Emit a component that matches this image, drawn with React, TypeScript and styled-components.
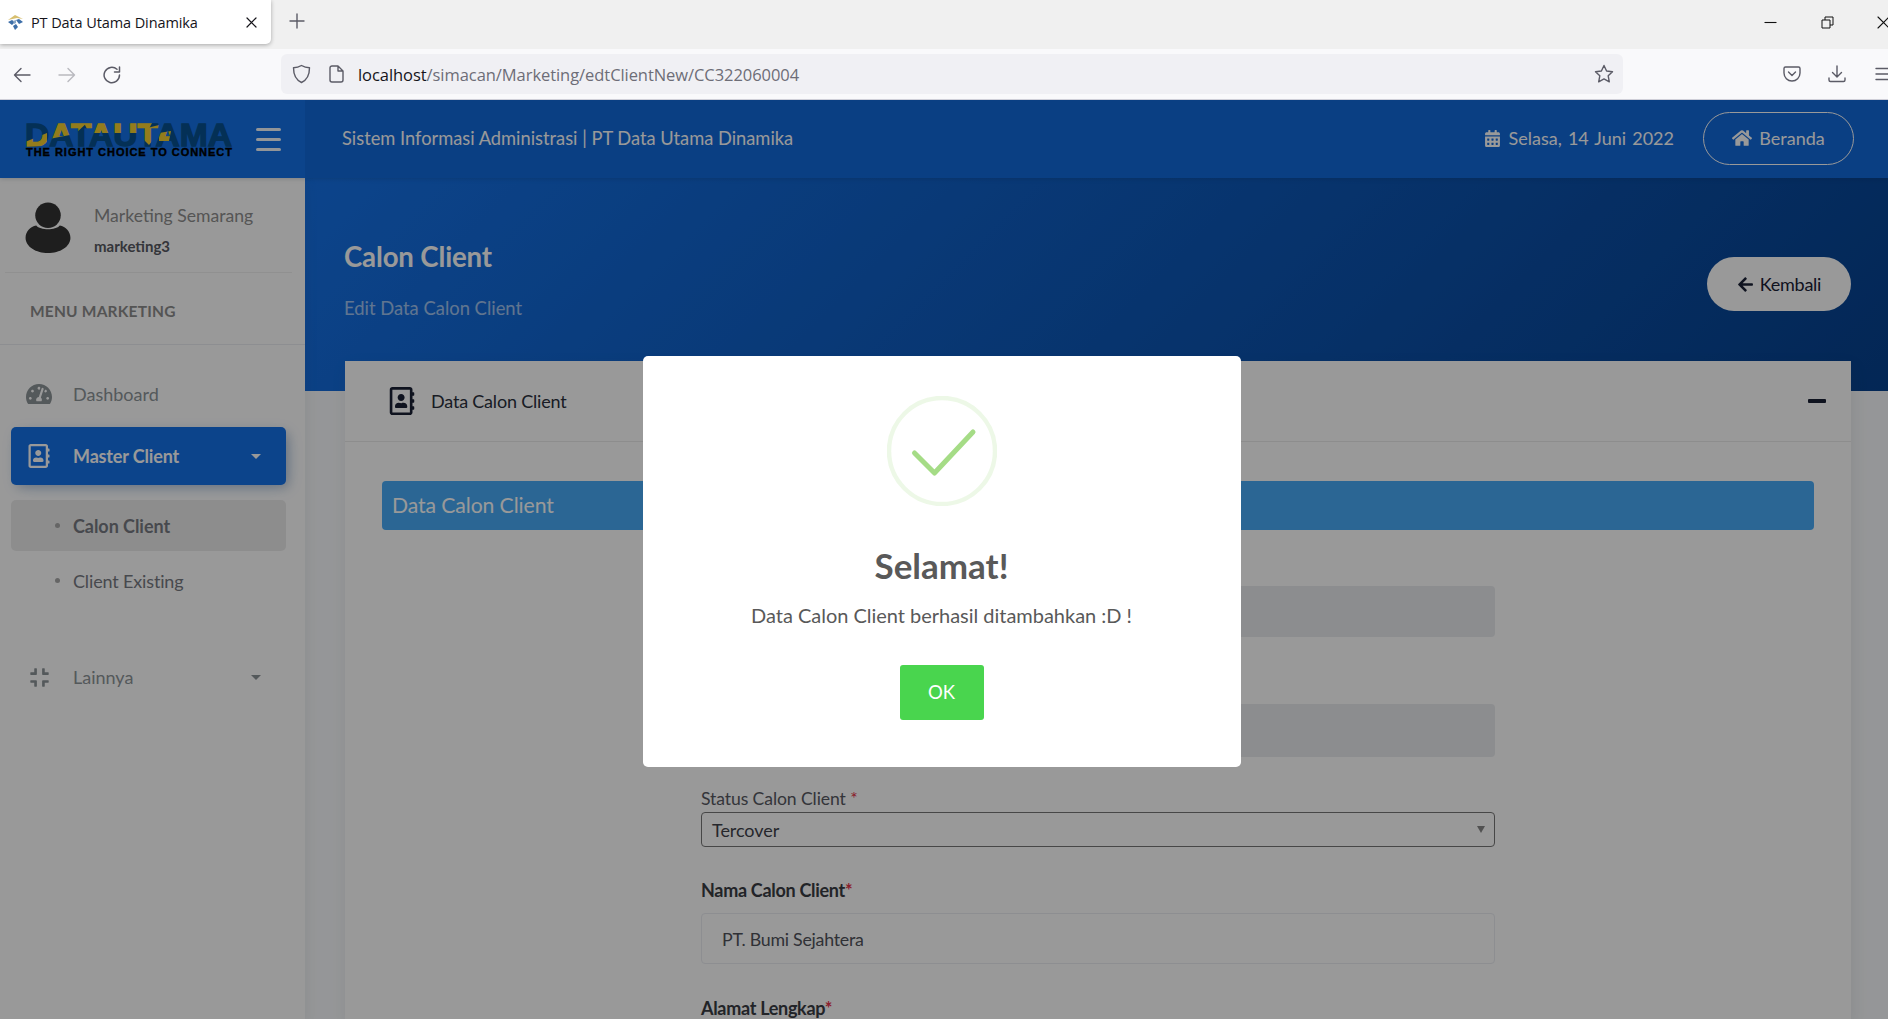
import React from 'react';
import styled, { createGlobalStyle } from 'styled-components';
import { FaHome, FaCalendarAlt, FaArrowLeft, FaTachometerAlt, FaRegAddressBook, FaCompress } from 'react-icons/fa';

const Global = createGlobalStyle`
  html, body { margin: 0; padding: 0; height: 100%; overflow: hidden; background: #fff; }
  * { box-sizing: border-box; }
  #root { height: 100vh; }
`;

const Shell = styled.div`
  width: 1888px; height: 1019px; display: flex; flex-direction: column; overflow: hidden;
  font-family: Lato, "Liberation Sans", sans-serif;
`;

/* Browser chrome */
const TabStrip = styled.div`
  height: 49px; flex: none; background: #f0f0f0; display: flex; align-items: flex-start;
`;
const Tab = styled.div`
  width: 271px; height: 44px; background: #fff; border-radius: 0 0 5px 0;
  box-shadow: 0 1px 4px rgba(0,0,0,.3); display: flex; align-items: center; padding: 0 14px 0 7px;
  font: 14.5px "Open Sans", "Noto Sans", sans-serif; color: #15141a;
`;
const TabTitle = styled.span` margin-left: 7px; flex: 1; white-space: nowrap; letter-spacing: -.1px; `;
const NewTab = styled.div` margin: 13px 0 0 18px; width: 16px; height: 18px; color: #5b5b66; display: flex; `;
const WindowControls = styled.div`
  margin-left: auto; height: 44px; display: flex; align-items: center; color: #111;
`;
const WinBtn = styled.div<{ $w: number }>` width: ${p => p.$w}px; display: flex; `;

const Toolbar = styled.div`
  height: 51px; flex: none; background: #f9f9fb; border-bottom: 1px solid #cfcfd8;
  display: flex; align-items: center; color: #5b5b66;
`;
const NavButtons = styled.div` width: 281px; padding: 2px 0 0 13px; display: flex; gap: 27px; `;
const DimmedIcon = styled.span` opacity: .4; display: flex; `;
const UrlBar = styled.div`
  width: 1342px; height: 40px; background: #f0f0f4; border-radius: 6px; display: flex; align-items: center;
  padding: 0 9px 0 11px; font: 16.5px "Open Sans", "Noto Sans", sans-serif;
`;
const PageGlyph = styled.span` margin-left: 17px; display: flex; `;
const UrlText = styled.div` margin-left: 14px; flex: 1; color: #6d6d77; white-space: nowrap; letter-spacing: -.06px; b { font-weight: 400; color: #15141a; } `;
const ToolIcons = styled.div` flex: 1; display: flex; justify-content: flex-end; gap: 27px; margin-right: -6px; overflow: hidden; `;

/* Page */
const Page = styled.div` position: relative; flex: 1; min-height: 0; display: flex; flex-direction: column; background: #f9fbfd; overflow: hidden; `;
const TopBar = styled.header` height: 78px; flex: none; display: flex; position: relative; z-index: 2; box-shadow: 0 0 5px rgba(18,38,63,.25); `;
const Brand = styled.div` width: 305px; background: #1572e8; display: flex; align-items: center; padding-left: 25px; `;
const Burger = styled.div` margin-left: 23px; width: 25px; display: flex; flex-direction: column; gap: 7px; `;
const BurgerBar = styled.span` height: 3px; background: #fff; border-radius: 2px; opacity: .95; `;
const HeaderBar = styled.div`
  flex: 1; background: #1269db; display: flex; align-items: center; padding: 0 34px 2px 37px; color: #fff; font-size: 18px;
`;
const HeaderTitle = styled.div` flex: 1; font-size: 18.3px; `;
const DateText = styled.div` display: flex; align-items: center; gap: 8px; margin-right: 29px; word-spacing: 1.5px; `;
const HomePill = styled.div`
  width: 151px; height: 53px; border: 1px solid #fff; border-radius: 27px; display: flex; align-items: center;
  justify-content: center; gap: 7px; font-size: 18px;
`;

const Body = styled.div` flex: 1; min-height: 0; display: flex; `;
const Sidebar = styled.aside`
  width: 305px; flex: none; background: #fff; position: relative; z-index: 1;
  box-shadow: 4px 4px 10px rgba(69,65,78,.06);
`;
const UserBlock = styled.div`
  height: 95px; margin: 0 13px 0 5px; border-bottom: 1px solid #f1f1f1; display: flex; align-items: center; padding: 4px 0 0 20px;
`;
const UserInfo = styled.div` margin-left: 23px; display: flex; flex-direction: column; gap: 11px; margin-top: 6px; `;
const UserName = styled.div` font-size: 17.6px; line-height: 20px; color: #8e8e8e; `;
const UserLogin = styled.div` font-size: 15px; line-height: 18px; font-weight: 700; color: #575962; `;
const MenuTitle = styled.div`
  height: 72px; border-bottom: 1px solid #ebedf2; display: flex; align-items: center; padding: 5px 0 0 30px;
  font-size: 15.5px; font-weight: 700; color: #8d8d8d; letter-spacing: .2px;
`;
const Nav = styled.nav` padding-top: 20px; `;
const NavItem = styled.div<{ $active?: boolean }>`
  height: 58px; margin: 0 19px 4px 11px; padding: 0 25px 0 15px; display: flex; align-items: center; border-radius: 5px;
  font-size: 18px; color: ${p => (p.$active ? '#fff' : '#8d9498')}; font-weight: ${p => (p.$active ? 700 : 400)};
  background: ${p => (p.$active ? '#1572e8' : 'transparent')};
  box-shadow: ${p => (p.$active ? '4px 4px 10px 0 rgba(0,0,0,.1), 4px 4px 15px -5px rgba(21,114,232,.4)' : 'none')};
  letter-spacing: ${p => (p.$active ? '-.15px' : '0')};
`;
const NavIcon = styled.span` width: 32px; margin: 0 18px 0 -3px; display: flex; justify-content: center; `;
const Caret = styled.span`
  margin-left: auto; width: 0; height: 0; border-left: 5px solid transparent; border-right: 5px solid transparent; border-top: 5px solid currentColor;
`;
const SubList = styled.div` padding-top: 11px; margin-bottom: 42px; `;
const SubItem = styled.div<{ $active?: boolean }>`
  height: 51px; margin: 0 19px 4px 11px; padding-left: 44px; display: flex; align-items: center; border-radius: 5px;
  font-size: 18px; color: #777a82; font-weight: ${p => (p.$active ? 700 : 400)};
  background: ${p => (p.$active ? '#ececec' : 'transparent')};
  letter-spacing: ${p => (p.$active ? '-.05px' : '-.15px')};
`;
const Dot = styled.span` width: 5px; height: 5px; border-radius: 50%; background: #a9a9a9; margin-right: 13px; flex: none; `;

const Main = styled.main` flex: 1; min-width: 0; display: flex; flex-direction: column; overflow: hidden; `;
const Hero = styled.div`
  height: 213px; flex: none; background: linear-gradient(-45deg, #06418e, #1572e8); display: flex; align-items: flex-start; justify-content: space-between;
  padding: 79px 37px 0 39px; color: #fff;
`;
const HeroTitle = styled.h2` margin: -17px 0 0; font-size: 27.6px; line-height: 34px; font-weight: 700; letter-spacing: -.15px; `;
const HeroSub = styled.div` margin-top: 24px; font-size: 18.4px; line-height: 20px; opacity: .6; `;
const BackBtn = styled.div`
  width: 144px; height: 54px; background: #fff; color: #1a2035; border-radius: 27px; display: flex; align-items: center; justify-content: center; gap: 6px;
  font-size: 18px; letter-spacing: -.25px;
`;
const Card = styled.section` margin: -30px 37px 0 40px; background: #fff; flex: 1; box-shadow: 2px 6px 15px 0 rgba(69,65,78,.1); `;
const CardHeader = styled.div`
  height: 81px; border-bottom: 1px solid #ebecec; display: flex; align-items: center; padding: 0 25px 0 43px; font-size: 18px; color: #2a2f3c;
`;
const CardHeaderTitle = styled.span` margin-left: 15px; flex: 1; letter-spacing: -.2px; `;
const MinusMark = styled.span` width: 18px; height: 4px; background: #1a2035; border-radius: 1px; `;
const CardBody = styled.div` padding: 39px 37px 0 37px; `;
const SectionBar = styled.div`
  height: 49px; background: #48abf7; border-radius: 4px; color: #fff; display: flex; align-items: center; padding: 0 0 2px 10px; font-size: 21.2px; letter-spacing: -.1px;
`;
const Form = styled.div` margin-left: 319px; width: 794px; `;
const ReadOnly = styled.div<{ $top: number; $h: number }>`
  margin-top: ${p => p.$top}px; height: ${p => p.$h}px; background: #e9ecef; border-radius: 4px;
`;
const Label = styled.div<{ $top: number; $strong?: boolean }>`
  margin-top: ${p => p.$top}px; line-height: 20px; font-size: ${p => (p.$strong ? 18 : 17.6)}px; color: ${p => (p.$strong ? '#3a3c44' : '#575962')};
  font-weight: ${p => (p.$strong ? 700 : 400)}; letter-spacing: ${p => (p.$strong ? '-.3px' : '-.1px')};
  i { font-style: normal; color: #e8344c; }
`;
const SelectBox = styled.div`
  margin-top: 3px; height: 35px; border: 1px solid #777; border-radius: 4px; background: #fff; display: flex; align-items: center; justify-content: space-between;
  padding: 0 9px 0 10px; font-size: 18px; color: #40424a; letter-spacing: -.05px;
`;
const SelectArrow = styled.span` width: 0; height: 0; border-left: 4.5px solid transparent; border-right: 4.5px solid transparent; border-top: 7px solid #888; `;
const TextBox = styled.div`
  margin-top: 13px; height: 51px; border: 1px solid #ebedf2; border-radius: 4px; display: flex; align-items: center; padding-left: 20px; font-size: 17.8px; color: #50525a; letter-spacing: -.25px;
`;

/* Dialog */
const Overlay = styled.div`
  position: absolute; inset: 0; z-index: 10; background: rgba(0,0,0,.4); display: flex; align-items: center; justify-content: center; padding: 3px 5px 0 0;
`;
const Modal = styled.div`
  width: 598px; height: 411px; background: #fff; border-radius: 5px; display: flex; flex-direction: column; align-items: center; padding-top: 40px;
`;
const ModalTitle = styled.div` margin-top: 37px; font-size: 35px; line-height: 44px; font-weight: 700; color: #595959; `;
const ModalText = styled.div` margin-top: 16px; font-size: 20px; line-height: 24px; color: #595959; letter-spacing: -.02px; `;
const OkBtn = styled.div`
  margin-top: 38px; width: 84px; height: 55px; background: #49d54e; border-radius: 3px; color: #fff; font-size: 18.5px; display: flex; align-items: center; justify-content: center;
`;

const Logo = () => (
  <svg width="208" height="36" viewBox="0 0 208 36" style={{ display: 'block', overflow: 'visible' }}>
    <defs>
      <pattern id="logoFill" patternUnits="userSpaceOnUse" width="208" height="36">
        <rect width="208" height="36" fill="#07508f" />
        <polygon points="0,21 22,12 22,25 0,26" fill="#f5cf30" />
        <polygon points="28,0 64,0 50,13 24,18" fill="#f5cf30" />
        <polygon points="58,0 128,0 122,12 64,12" fill="#f5cf30" />
        <polygon points="118,8 134,4 132,14 124,24 114,14" fill="#f5cf30" />
        <polygon points="134,12 146,10 144,20 134,20" fill="#f5cf30" />
      </pattern>
    </defs>
    <text x="0" y="24.5" textLength="207" lengthAdjust="spacingAndGlyphs" fontFamily="Liberation Sans" fontWeight="700" fontSize="32" fill="url(#logoFill)" stroke="url(#logoFill)" strokeWidth="1.3">DATAUTAMA</text>
    <text x="1" y="34.5" textLength="206" lengthAdjust="spacing" fontFamily="Liberation Sans" fontWeight="700" fontSize="11" fill="#000" stroke="#000" strokeWidth=".4">THE RIGHT CHOICE TO CONNECT</text>
  </svg>
);

const Favicon = () => (
  <svg width="17" height="17" viewBox="0 0 17 17">
    <path d="M1 6 L8 1 L16 5 L10 4 Z" fill="#d8c070" />
    <path d="M1 8 L5 6 L8 8 L5 11 Z M9 6 L12 5 L16 8 L12 10 Z M6 12 L9 10 L11 13 L8 16 Z" fill="#3c6ea8" />
    <path d="M6 7 L9 6 L9 9 L7 10 Z" fill="#8aa8c8" />
  </svg>
);
const Glyph = ({ w = 18, h = 18, children }: { w?: number; h?: number; children: React.ReactNode }) => (
  <svg width={w} height={h} viewBox={`0 0 ${w} ${h}`} fill="none" stroke="currentColor" strokeWidth="1.4" strokeLinecap="round" strokeLinejoin="round" style={{ display: 'block', flex: 'none' }}>{children}</svg>
);
const Avatar = () => (
  <svg width="46" height="51" viewBox="0 0 45 50" style={{ flex: 'none' }}>
    <circle cx="22.5" cy="13" r="12.5" fill="#333" />
    <path d="M11 23 C15 28 30 28 34 23 C40 24 44.5 29 44.5 35 C44.5 44 34 50 22.5 50 C11 50 0.5 44 0.5 35 C0.5 29 5 24 11 23 Z" fill="#333" />
  </svg>
);
const SuccessMark = () => (
  <svg width="110" height="110" viewBox="0 0 110 110">
    <circle cx="55" cy="55" r="53" fill="none" stroke="#a5dc86" strokeOpacity=".2" strokeWidth="4.5" />
    <path d="M27.5 57 L47.5 77 L86 36" fill="none" stroke="#a5dc86" strokeWidth="5" strokeLinecap="round" strokeLinejoin="round" />
  </svg>
);

export default function App() {
  return (
    <Shell>
      <Global />
      <TabStrip>
        <Tab>
          <Favicon />
          <TabTitle>PT Data Utama Dinamika</TabTitle>
          <Glyph w={11} h={11}><path d="M1 1 L10 10 M10 1 L1 10" strokeWidth="1.2" /></Glyph>
        </Tab>
        <NewTab>
          <Glyph w={16} h={16}><path d="M8 1 V15 M1 8 H15" /></Glyph>
        </NewTab>
        <WindowControls>
          <WinBtn $w={57}><Glyph w={13} h={13}><path d="M0.5 6.5 H12.5" strokeWidth="1.1" strokeLinecap="butt" /></Glyph></WinBtn>
          <WinBtn $w={56}><Glyph w={13} h={13}><path d="M1 4 H9 V12 H1 Z M4 4 V1 H12 V9 H9" strokeWidth="1" strokeLinecap="butt" strokeLinejoin="miter" /></Glyph></WinBtn>
          <WinBtn $w={11}><Glyph w={13} h={13}><path d="M1 1 L12 12 M12 1 L1 12" strokeWidth="1.1" /></Glyph></WinBtn>
        </WindowControls>
      </TabStrip>
      <Toolbar>
        <NavButtons>
          <Glyph><path d="M17 9 H1.5 M8 2.5 L1.5 9 L8 15.5" /></Glyph>
          <DimmedIcon><Glyph><path d="M1 9 H16.5 M10 2.5 L16.5 9 L10 15.5" /></Glyph></DimmedIcon>
          <Glyph><path d="M16.5 9 A7.7 7.7 0 1 1 14 3.3 M16.5 1 V6 H11.5" strokeWidth="1.5" /></Glyph>
        </NavButtons>
        <UrlBar>
          <Glyph w={19} h={20}><path d="M9.5 1.5 C12 3 14.5 3.7 17.5 3.8 C17.5 11 15 16 9.5 18.5 C4 16 1.5 11 1.5 3.8 C4.5 3.7 7 3 9.5 1.5 Z" strokeWidth="1.4" /></Glyph>
          <PageGlyph>
            <Glyph w={16} h={18}><path d="M2 3 A2 2 0 0 1 4 1 H10 L15 6 V15 A2 2 0 0 1 13 17 H4 A2 2 0 0 1 2 15 Z M10 1 V6 H15" strokeWidth="1.4" /></Glyph>
          </PageGlyph>
          <UrlText><b>localhost</b>/simacan/Marketing/edtClientNew/CC322060004</UrlText>
          <Glyph w={20} h={20}><path d="M10 1.5 L12.6 7 L18.5 7.7 L14.2 11.8 L15.3 17.8 L10 14.9 L4.7 17.8 L5.8 11.8 L1.5 7.7 L7.4 7 Z" strokeWidth="1.4" /></Glyph>
        </UrlBar>
        <ToolIcons>
          <Glyph w={18} h={18}><path d="M2.5 2 H15.5 A1.5 1.5 0 0 1 17 3.5 V8 A8 8 0 0 1 1 8 V3.5 A1.5 1.5 0 0 1 2.5 2 Z M5.5 7 L9 10.5 L12.5 7" /></Glyph>
          <Glyph w={18} h={18}><path d="M9 1 V11.5 M4.5 7.5 L9 12 L13.5 7.5 M1 13 V15 A1.5 1.5 0 0 0 2.5 16.5 H15.5 A1.5 1.5 0 0 0 17 15 V13" /></Glyph>
          <Glyph w={21} h={18}><path d="M3 3.5 H21 M3 9 H21 M3 14.5 H21" /></Glyph>
        </ToolIcons>
      </Toolbar>
      <Page>
        <TopBar>
          <Brand>
            <Logo />
            <Burger><BurgerBar /><BurgerBar /><BurgerBar /></Burger>
          </Brand>
          <HeaderBar>
            <HeaderTitle>Sistem Informasi Administrasi | PT Data Utama Dinamika</HeaderTitle>
            <DateText><FaCalendarAlt size={17} />Selasa, 14 Juni 2022</DateText>
            <HomePill><FaHome size={20} />Beranda</HomePill>
          </HeaderBar>
        </TopBar>
        <Body>
          <Sidebar>
            <UserBlock>
              <Avatar />
              <UserInfo>
                <UserName>Marketing Semarang</UserName>
                <UserLogin>marketing3</UserLogin>
              </UserInfo>
            </UserBlock>
            <MenuTitle>MENU MARKETING</MenuTitle>
            <Nav>
              <NavItem><NavIcon><FaTachometerAlt size={26} /></NavIcon>Dashboard</NavItem>
              <NavItem $active><NavIcon><FaRegAddressBook size={24} /></NavIcon>Master Client<Caret /></NavItem>
              <SubList>
                <SubItem $active><Dot />Calon Client</SubItem>
                <SubItem><Dot />Client Existing</SubItem>
              </SubList>
              <NavItem><NavIcon><FaCompress size={21} /></NavIcon>Lainnya<Caret /></NavItem>
            </Nav>
          </Sidebar>
          <Main>
            <Hero>
              <div>
                <HeroTitle>Calon Client</HeroTitle>
                <HeroSub>Edit Data Calon Client</HeroSub>
              </div>
              <BackBtn><FaArrowLeft size={17} />Kembali</BackBtn>
            </Hero>
            <Card>
              <CardHeader>
                <FaRegAddressBook size={28} color="#1a2035" />
                <CardHeaderTitle>Data Calon Client</CardHeaderTitle>
                <MinusMark />
              </CardHeader>
              <CardBody>
                <SectionBar>Data Calon Client</SectionBar>
                <Form>
                  <ReadOnly $top={56} $h={51} />
                  <ReadOnly $top={67} $h={53} />
                  <Label $top={32}>Status Calon Client <i>*</i></Label>
                  <SelectBox>Tercover<SelectArrow /></SelectBox>
                  <Label $top={33} $strong>Nama Calon Client<i>*</i></Label>
                  <TextBox>PT. Bumi Sejahtera</TextBox>
                  <Label $top={34} $strong>Alamat Lengkap<i>*</i></Label>
                </Form>
              </CardBody>
            </Card>
          </Main>
        </Body>
        <Overlay>
          <Modal>
            <SuccessMark />
            <ModalTitle>Selamat!</ModalTitle>
            <ModalText>Data Calon Client berhasil ditambahkan :D !</ModalText>
            <OkBtn>OK</OkBtn>
          </Modal>
        </Overlay>
      </Page>
    </Shell>
  );
}
